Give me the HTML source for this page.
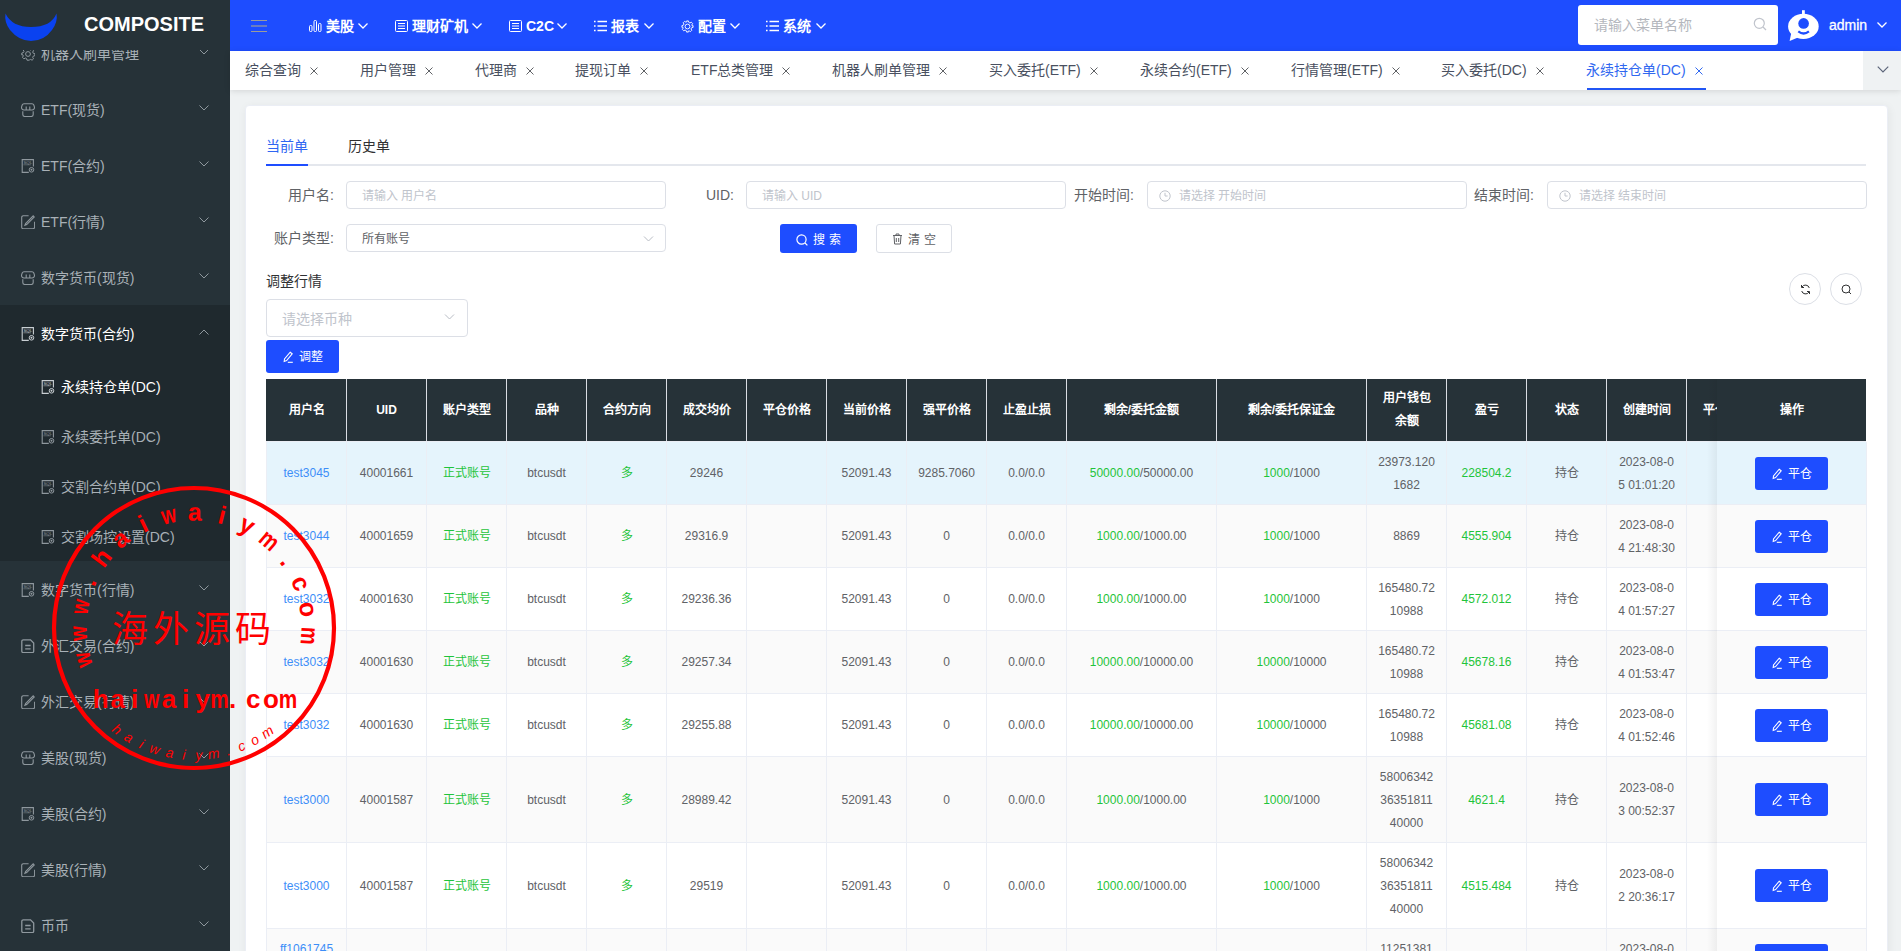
<!DOCTYPE html>
<html lang="zh-CN"><head><meta charset="utf-8">
<style>
*{box-sizing:border-box;margin:0;padding:0}
html,body{width:1901px;height:951px;overflow:hidden;background:#eff2f3;font-family:"Liberation Sans",sans-serif;font-size:14px;color:#303133}
.abs{position:absolute}
svg{display:block}
#side{position:absolute;left:0;top:0;width:230px;height:951px;background:#263238;overflow:hidden}
#logo{position:absolute;left:0;top:0;width:230px;height:50px;background:#263238;z-index:2}
#logo .t{position:absolute;left:84px;top:12px;font-size:20px;font-weight:bold;color:#fff;line-height:24px}
.mi{position:absolute;left:0;width:230px;height:56px;color:#a9b1b7;font-size:14px;line-height:20px}
.mi .ic{position:absolute;left:21px;top:22px}
.mi .tx{position:absolute;left:41px;top:19px;white-space:nowrap}
.mi .ch{position:absolute;left:199px;top:24px}
.mi.act .tx{color:#fff}
.sub{position:absolute;left:0;top:305px;width:230px;height:256px;background:#1f292e}
.si{position:absolute;left:0;width:230px;height:50px;color:#a8b0b6;font-size:14px;line-height:20px}
.si .ic{position:absolute;left:41px;top:19px}
.si .tx{position:absolute;left:61px;top:16px;white-space:nowrap}
.si.act .tx{color:#fff}
#hdr{position:absolute;left:230px;top:0;width:1671px;height:51px;background:#1e4dff}
.hb{position:absolute;left:0;width:16px;height:1px;background:#9c9c98}
.nav{position:absolute;top:16px;height:20px;color:#fff;font-size:14px;font-weight:bold;line-height:20px;white-space:nowrap}
#msearch{position:absolute;left:1348px;top:5px;width:200px;height:40px;background:#fff;border-radius:3px}
#msearch .ph{position:absolute;left:16px;top:11px;font-size:14px;line-height:18px;color:#b4b7bd}
#tabs{position:absolute;left:230px;top:51px;width:1671px;height:39px;background:#fff;box-shadow:0 1px 6px rgba(0,0,0,.12)}
.tb{position:absolute;top:9px;font-size:14px;line-height:20px;color:#495060;white-space:nowrap}
.tb .x{display:inline-block;margin-left:9px;vertical-align:0px}
.tb.on{color:#3068f0}
#card{position:absolute;left:245px;top:105px;width:1643px;height:900px;background:#fff;border:1px solid #ebeef5;border-radius:4px;box-shadow:1px 2px 10px rgba(0,0,0,.06)}
.ctab{font-size:14px;line-height:20px}
.flab{font-size:14px;line-height:20px;color:#606266;white-space:nowrap}
.inp{background:#fff;border:1px solid #dcdfe6;border-radius:4px}
.btn{border-radius:3px;font-size:12px;line-height:16px;white-space:nowrap}
.circ{width:32px;height:32px;border:1px solid #dcdfe6;border-radius:50%;background:#fff}
.th{border-right:1px solid #d9dde3;color:#fff;font-weight:bold;font-size:12px;line-height:23px;display:flex;align-items:center;justify-content:center;text-align:center}
.th2{color:#fff;font-weight:bold;font-size:12px;line-height:23px}
.cc{width:100%;text-align:center}
#tbl .abs.th2{}
.tr{border-bottom:1px solid #ebeef5}
.td{border-right:1px solid #ebeef5;font-size:12px;line-height:23px;display:flex;align-items:center;justify-content:center;text-align:center}

</style></head><body>
<div id="side"><div class="mi" style="top:25px"><span class="ic"><svg width="14" height="14" viewBox="0 0 14 14" fill="none" stroke="#8f989e" stroke-width="1"><path d="M6 .8h2l.4 1.6 1.2.6 1.5-.8 1.4 1.4-.8 1.5.6 1.2 1.6.4v2l-1.6.4-.6 1.2.8 1.5-1.4 1.4-1.5-.8-1.2.6L8 13.2H6l-.4-1.6-1.2-.6-1.5.8-1.4-1.4.8-1.5-.6-1.2L.8 8V6l1.6-.4.6-1.2-.8-1.5 1.4-1.4 1.5.8 1.2-.6z"/><circle cx="7" cy="7" r="2.4"/></svg></span><span class="tx">机器人刷单管理</span><span class="ch"><svg width="10" height="6" viewBox="0 0 10 6" fill="none" stroke="#8f989e" stroke-width="1"><path d="M0.5 0.5L5 5l4.5-4.5"/></svg></span></div><div class="mi" style="top:81px"><span class="ic"><svg width="14" height="14" viewBox="0 0 14 14" fill="none" stroke="#8f989e" stroke-width="1.1"><path d="M3 .8h8a2 2 0 0 1 1.8 1.2l.6 1.8a2.6 2.6 0 0 1-2.6 3.2H3.2A2.6 2.6 0 0 1 .6 3.8l.6-1.8A2 2 0 0 1 3 .8z"/><path d="M5.2 3.5v3.5M8.8 3.5v3.5"/><path d="M1.8 8.3v3.2a2 2 0 0 0 2 2h6.4a2 2 0 0 0 2-2V8.3"/></svg></span><span class="tx">ETF(现货)</span><span class="ch"><svg width="10" height="6" viewBox="0 0 10 6" fill="none" stroke="#8f989e" stroke-width="1"><path d="M0.5 0.5L5 5l4.5-4.5"/></svg></span></div><div class="mi" style="top:137px"><span class="ic"><svg width="14" height="14" viewBox="0 0 14 14" fill="none" stroke="#8f989e" stroke-width="1.1"><path d="M7.8 13.4H1.2V.6h11.2v7"/><text x="2.4" y="5" font-size="4.4" fill="#8f989e" stroke="none" font-family="Liberation Sans">SQL</text><path d="M2.4 5.8h7.5" stroke-width=".5"/><circle cx="10.5" cy="10.8" r="2.3" stroke-width="1"/><circle cx="10.5" cy="10.8" r="1" fill="#8f989e" stroke="none"/></svg></span><span class="tx">ETF(合约)</span><span class="ch"><svg width="10" height="6" viewBox="0 0 10 6" fill="none" stroke="#8f989e" stroke-width="1"><path d="M0.5 0.5L5 5l4.5-4.5"/></svg></span></div><div class="mi" style="top:193px"><span class="ic"><svg width="14" height="14" viewBox="0 0 14 14" fill="none" stroke="#8f989e" stroke-width="1.1"><path d="M7.6 .8H2.2A1.5 1.5 0 0 0 .7 2.3v9.9a1.5 1.5 0 0 0 1.5 1.5h9.9a1.5 1.5 0 0 0 1.5-1.5V6.7"/><path d="M12.2 .9l1.1 1.1-7.6 7.6-1.8.7.7-1.8z"/></svg></span><span class="tx">ETF(行情)</span><span class="ch"><svg width="10" height="6" viewBox="0 0 10 6" fill="none" stroke="#8f989e" stroke-width="1"><path d="M0.5 0.5L5 5l4.5-4.5"/></svg></span></div><div class="mi" style="top:249px"><span class="ic"><svg width="14" height="14" viewBox="0 0 14 14" fill="none" stroke="#8f989e" stroke-width="1.1"><path d="M3 .8h8a2 2 0 0 1 1.8 1.2l.6 1.8a2.6 2.6 0 0 1-2.6 3.2H3.2A2.6 2.6 0 0 1 .6 3.8l.6-1.8A2 2 0 0 1 3 .8z"/><path d="M5.2 3.5v3.5M8.8 3.5v3.5"/><path d="M1.8 8.3v3.2a2 2 0 0 0 2 2h6.4a2 2 0 0 0 2-2V8.3"/></svg></span><span class="tx">数字货币(现货)</span><span class="ch"><svg width="10" height="6" viewBox="0 0 10 6" fill="none" stroke="#8f989e" stroke-width="1"><path d="M0.5 0.5L5 5l4.5-4.5"/></svg></span></div><div class="mi" style="top:561px"><span class="ic"><svg width="14" height="14" viewBox="0 0 14 14" fill="none" stroke="#8f989e" stroke-width="1.1"><path d="M7.8 13.4H1.2V.6h11.2v7"/><text x="2.4" y="5" font-size="4.4" fill="#8f989e" stroke="none" font-family="Liberation Sans">SQL</text><path d="M2.4 5.8h7.5" stroke-width=".5"/><circle cx="10.5" cy="10.8" r="2.3" stroke-width="1"/><circle cx="10.5" cy="10.8" r="1" fill="#8f989e" stroke="none"/></svg></span><span class="tx">数字货币(行情)</span><span class="ch"><svg width="10" height="6" viewBox="0 0 10 6" fill="none" stroke="#8f989e" stroke-width="1"><path d="M0.5 0.5L5 5l4.5-4.5"/></svg></span></div><div class="mi" style="top:617px"><span class="ic"><svg width="14" height="14" viewBox="0 0 14 14" fill="none" stroke="#8f989e" stroke-width="1.3"><path d="M2.3.8h7.2l3.2 3.2v8.2a1.5 1.5 0 0 1-1.5 1.5H2.3A1.5 1.5 0 0 1 .8 12.2V2.3A1.5 1.5 0 0 1 2.3.8z"/><path d="M4.2 6.5h5.4M4.2 9.8h5.4"/></svg></span><span class="tx">外汇交易(合约)</span><span class="ch"><svg width="10" height="6" viewBox="0 0 10 6" fill="none" stroke="#8f989e" stroke-width="1"><path d="M0.5 0.5L5 5l4.5-4.5"/></svg></span></div><div class="mi" style="top:673px"><span class="ic"><svg width="14" height="14" viewBox="0 0 14 14" fill="none" stroke="#8f989e" stroke-width="1.1"><path d="M7.6 .8H2.2A1.5 1.5 0 0 0 .7 2.3v9.9a1.5 1.5 0 0 0 1.5 1.5h9.9a1.5 1.5 0 0 0 1.5-1.5V6.7"/><path d="M12.2 .9l1.1 1.1-7.6 7.6-1.8.7.7-1.8z"/></svg></span><span class="tx">外汇交易(行情)</span><span class="ch"><svg width="10" height="6" viewBox="0 0 10 6" fill="none" stroke="#8f989e" stroke-width="1"><path d="M0.5 0.5L5 5l4.5-4.5"/></svg></span></div><div class="mi" style="top:729px"><span class="ic"><svg width="14" height="14" viewBox="0 0 14 14" fill="none" stroke="#8f989e" stroke-width="1.1"><path d="M3 .8h8a2 2 0 0 1 1.8 1.2l.6 1.8a2.6 2.6 0 0 1-2.6 3.2H3.2A2.6 2.6 0 0 1 .6 3.8l.6-1.8A2 2 0 0 1 3 .8z"/><path d="M5.2 3.5v3.5M8.8 3.5v3.5"/><path d="M1.8 8.3v3.2a2 2 0 0 0 2 2h6.4a2 2 0 0 0 2-2V8.3"/></svg></span><span class="tx">美股(现货)</span><span class="ch"><svg width="10" height="6" viewBox="0 0 10 6" fill="none" stroke="#8f989e" stroke-width="1"><path d="M0.5 0.5L5 5l4.5-4.5"/></svg></span></div><div class="mi" style="top:785px"><span class="ic"><svg width="14" height="14" viewBox="0 0 14 14" fill="none" stroke="#8f989e" stroke-width="1.1"><path d="M7.8 13.4H1.2V.6h11.2v7"/><text x="2.4" y="5" font-size="4.4" fill="#8f989e" stroke="none" font-family="Liberation Sans">SQL</text><path d="M2.4 5.8h7.5" stroke-width=".5"/><circle cx="10.5" cy="10.8" r="2.3" stroke-width="1"/><circle cx="10.5" cy="10.8" r="1" fill="#8f989e" stroke="none"/></svg></span><span class="tx">美股(合约)</span><span class="ch"><svg width="10" height="6" viewBox="0 0 10 6" fill="none" stroke="#8f989e" stroke-width="1"><path d="M0.5 0.5L5 5l4.5-4.5"/></svg></span></div><div class="mi" style="top:841px"><span class="ic"><svg width="14" height="14" viewBox="0 0 14 14" fill="none" stroke="#8f989e" stroke-width="1.1"><path d="M7.6 .8H2.2A1.5 1.5 0 0 0 .7 2.3v9.9a1.5 1.5 0 0 0 1.5 1.5h9.9a1.5 1.5 0 0 0 1.5-1.5V6.7"/><path d="M12.2 .9l1.1 1.1-7.6 7.6-1.8.7.7-1.8z"/></svg></span><span class="tx">美股(行情)</span><span class="ch"><svg width="10" height="6" viewBox="0 0 10 6" fill="none" stroke="#8f989e" stroke-width="1"><path d="M0.5 0.5L5 5l4.5-4.5"/></svg></span></div><div class="mi" style="top:897px"><span class="ic"><svg width="14" height="14" viewBox="0 0 14 14" fill="none" stroke="#8f989e" stroke-width="1.3"><path d="M2.3.8h7.2l3.2 3.2v8.2a1.5 1.5 0 0 1-1.5 1.5H2.3A1.5 1.5 0 0 1 .8 12.2V2.3A1.5 1.5 0 0 1 2.3.8z"/><path d="M4.2 6.5h5.4M4.2 9.8h5.4"/></svg></span><span class="tx">币币</span><span class="ch"><svg width="10" height="6" viewBox="0 0 10 6" fill="none" stroke="#8f989e" stroke-width="1"><path d="M0.5 0.5L5 5l4.5-4.5"/></svg></span></div><div class="sub"><div class="mi act" style="top:0"><span class="ic"><svg width="14" height="14" viewBox="0 0 14 14" fill="none" stroke="#c9cfd3" stroke-width="1.1"><path d="M7.8 13.4H1.2V.6h11.2v7"/><text x="2.4" y="5" font-size="4.4" fill="#c9cfd3" stroke="none" font-family="Liberation Sans">SQL</text><path d="M2.4 5.8h7.5" stroke-width=".5"/><circle cx="10.5" cy="10.8" r="2.3" stroke-width="1"/><circle cx="10.5" cy="10.8" r="1" fill="#c9cfd3" stroke="none"/></svg></span><span class="tx">数字货币(合约)</span><span class="ch"><svg width="10" height="6" viewBox="0 0 10 6" fill="none" stroke="#8f989e" stroke-width="1"><path d="M0.5 5.5L5 1l4.5 4.5"/></svg></span></div><div class="si act" style="top:56px"><span class="ic"><svg width="14" height="14" viewBox="0 0 14 14" fill="none" stroke="#c9cfd3" stroke-width="1.1"><path d="M7.8 13.4H1.2V.6h11.2v7"/><text x="2.4" y="5" font-size="4.4" fill="#c9cfd3" stroke="none" font-family="Liberation Sans">SQL</text><path d="M2.4 5.8h7.5" stroke-width=".5"/><circle cx="10.5" cy="10.8" r="2.3" stroke-width="1"/><circle cx="10.5" cy="10.8" r="1" fill="#c9cfd3" stroke="none"/></svg></span><span class="tx">永续持仓单(DC)</span></div><div class="si" style="top:106px"><span class="ic"><svg width="14" height="14" viewBox="0 0 14 14" fill="none" stroke="#8f989e" stroke-width="1.1"><path d="M7.8 13.4H1.2V.6h11.2v7"/><text x="2.4" y="5" font-size="4.4" fill="#8f989e" stroke="none" font-family="Liberation Sans">SQL</text><path d="M2.4 5.8h7.5" stroke-width=".5"/><circle cx="10.5" cy="10.8" r="2.3" stroke-width="1"/><circle cx="10.5" cy="10.8" r="1" fill="#8f989e" stroke="none"/></svg></span><span class="tx">永续委托单(DC)</span></div><div class="si" style="top:156px"><span class="ic"><svg width="14" height="14" viewBox="0 0 14 14" fill="none" stroke="#8f989e" stroke-width="1.1"><path d="M7.8 13.4H1.2V.6h11.2v7"/><text x="2.4" y="5" font-size="4.4" fill="#8f989e" stroke="none" font-family="Liberation Sans">SQL</text><path d="M2.4 5.8h7.5" stroke-width=".5"/><circle cx="10.5" cy="10.8" r="2.3" stroke-width="1"/><circle cx="10.5" cy="10.8" r="1" fill="#8f989e" stroke="none"/></svg></span><span class="tx">交割合约单(DC)</span></div><div class="si" style="top:206px"><span class="ic"><svg width="14" height="14" viewBox="0 0 14 14" fill="none" stroke="#8f989e" stroke-width="1.1"><path d="M7.8 13.4H1.2V.6h11.2v7"/><text x="2.4" y="5" font-size="4.4" fill="#8f989e" stroke="none" font-family="Liberation Sans">SQL</text><path d="M2.4 5.8h7.5" stroke-width=".5"/><circle cx="10.5" cy="10.8" r="2.3" stroke-width="1"/><circle cx="10.5" cy="10.8" r="1" fill="#8f989e" stroke="none"/></svg></span><span class="tx">交割场控设置(DC)</span></div></div><div id="logo">
 <svg class="abs" style="left:4px;top:12px" width="54" height="30" viewBox="0 0 54 30"><path d="M1.5 1.5 Q0 10 6 18 Q15 29 27 29 Q40 29 48 18 Q54 10 52.5 1.5 Q47 15 27 15 Q8 15 1.5 1.5 Z" fill="#0a42f0"/></svg>
 <div class="t">COMPOSITE</div>
</div></div>
<div id="hdr"><div class="abs" style="left:21px;top:19px;width:16px;height:14px"><div class="hb" style="top:1px"></div><div class="hb" style="top:6px;height:2px;opacity:.6"></div><div class="hb" style="top:12px"></div></div><span class="abs" style="left:79px;top:20px"><svg width="13" height="12" viewBox="0 0 13 12" fill="none" stroke="#ffffff" stroke-width="1"><rect x="0.5" y="5.5" width="2.5" height="6" rx="1"/><rect x="5" y="0.5" width="2.5" height="11" rx="1"/><rect x="9.5" y="3.5" width="2.5" height="8" rx="1"/></svg></span><span class="nav" style="left:96px">美股</span><span class="abs" style="left:128px;top:23px"><svg width="10" height="6" viewBox="0 0 10 6" fill="none" stroke="#ffffff" stroke-width="1.3"><path d="M0.5 0.5L5 5l4.5-4.5"/></svg></span><span class="abs" style="left:165px;top:20px"><svg width="13" height="12" viewBox="0 0 13 12" fill="none" stroke="#ffffff" stroke-width="1"><rect x="0.5" y="0.5" width="12" height="11" rx="1"/><path d="M3 3.5h7M3 6h7M3 8.5h7"/></svg></span><span class="nav" style="left:182px">理财矿机</span><span class="abs" style="left:242px;top:23px"><svg width="10" height="6" viewBox="0 0 10 6" fill="none" stroke="#ffffff" stroke-width="1.3"><path d="M0.5 0.5L5 5l4.5-4.5"/></svg></span><span class="abs" style="left:279px;top:20px"><svg width="13" height="12" viewBox="0 0 13 12" fill="none" stroke="#ffffff" stroke-width="1"><rect x="0.5" y="0.5" width="12" height="11" rx="1"/><path d="M3 3.5h7M3 6h7M3 8.5h7"/></svg></span><span class="nav" style="left:296px">C2C</span><span class="abs" style="left:327px;top:23px"><svg width="10" height="6" viewBox="0 0 10 6" fill="none" stroke="#ffffff" stroke-width="1.3"><path d="M0.5 0.5L5 5l4.5-4.5"/></svg></span><span class="abs" style="left:364px;top:20px"><svg width="13" height="12" viewBox="0 0 13 12" fill="none" stroke="#ffffff" stroke-width="1.4"><path d="M0 1.5h1.6M0 6h1.6M0 10.5h1.6M3.5 1.5H13M3.5 6H13M3.5 10.5H13"/></svg></span><span class="nav" style="left:381px">报表</span><span class="abs" style="left:414px;top:23px"><svg width="10" height="6" viewBox="0 0 10 6" fill="none" stroke="#ffffff" stroke-width="1.3"><path d="M0.5 0.5L5 5l4.5-4.5"/></svg></span><span class="abs" style="left:451px;top:20px"><svg width="13" height="13" viewBox="0 0 14 14" fill="none" stroke="#ffffff" stroke-width="1"><path d="M6 1h2l.4 1.6 1.2.6 1.5-.8 1.4 1.4-.8 1.5.6 1.2L13 6v2l-1.6.4-.6 1.2.8 1.5-1.4 1.4-1.5-.8-1.2.6L8 13H6l-.4-1.6-1.2-.6-1.5.8-1.4-1.4.8-1.5-.6-1.2L1 8V6l1.6-.4.6-1.2-.8-1.5 1.4-1.4 1.5.8 1.2-.6z"/><circle cx="7" cy="7" r="2.6"/></svg></span><span class="nav" style="left:468px">配置</span><span class="abs" style="left:500px;top:23px"><svg width="10" height="6" viewBox="0 0 10 6" fill="none" stroke="#ffffff" stroke-width="1.3"><path d="M0.5 0.5L5 5l4.5-4.5"/></svg></span><span class="abs" style="left:536px;top:20px"><svg width="13" height="12" viewBox="0 0 13 12" fill="none" stroke="#ffffff" stroke-width="1.4"><path d="M0 1.5h1.6M0 6h1.6M0 10.5h1.6M3.5 1.5H13M3.5 6H13M3.5 10.5H13"/></svg></span><span class="nav" style="left:553px">系统</span><span class="abs" style="left:586px;top:23px"><svg width="10" height="6" viewBox="0 0 10 6" fill="none" stroke="#ffffff" stroke-width="1.3"><path d="M0.5 0.5L5 5l4.5-4.5"/></svg></span><div id="msearch"><span class="ph">请输入菜单名称</span><svg class="abs" style="left:175px;top:12px" width="14" height="14" viewBox="0 0 14 14" fill="none" stroke="#c0c4cc" stroke-width="1.2"><circle cx="6.3" cy="6.3" r="5"/><path d="M10 10l3 3"/></svg></div><svg class="abs" style="left:1558px;top:9px" width="32" height="34" viewBox="0 0 32 34"><ellipse cx="15.4" cy="17.4" rx="15.3" ry="12.6" fill="#fff"/><path d="M3.5 23 L1.6 32 L10 28.5 Z" fill="#fff"/><rect x="14" y="1.2" width="2.8" height="4.5" fill="#fff"/><circle cx="15.6" cy="14.4" r="5.3" fill="#1e4dff"/><path d="M10.3 22.3 Q15.6 26.7 20.9 22.3" stroke="#1e4dff" stroke-width="2.2" fill="none"/></svg><span class="abs" style="left:1599px;top:15px;font-size:14px;line-height:20px;color:#fff;-webkit-text-stroke:0.3px #fff">admin</span><span class="abs" style="left:1647px;top:22px"><svg width="10" height="6" viewBox="0 0 10 6" fill="none" stroke="#ffffff" stroke-width="1.3"><path d="M0.5 0.5L5 5l4.5-4.5"/></svg></span></div>
<div id="tabs"><span class="tb" style="left:15px">综合查询<svg class="x" width="8" height="8" viewBox="0 0 8 8" stroke="#606266" stroke-width="1"><path d="M.5.5l7 7M7.5.5l-7 7"/></svg></span><span class="tb" style="left:130px">用户管理<svg class="x" width="8" height="8" viewBox="0 0 8 8" stroke="#606266" stroke-width="1"><path d="M.5.5l7 7M7.5.5l-7 7"/></svg></span><span class="tb" style="left:245px">代理商<svg class="x" width="8" height="8" viewBox="0 0 8 8" stroke="#606266" stroke-width="1"><path d="M.5.5l7 7M7.5.5l-7 7"/></svg></span><span class="tb" style="left:345px">提现订单<svg class="x" width="8" height="8" viewBox="0 0 8 8" stroke="#606266" stroke-width="1"><path d="M.5.5l7 7M7.5.5l-7 7"/></svg></span><span class="tb" style="left:461px">ETF总类管理<svg class="x" width="8" height="8" viewBox="0 0 8 8" stroke="#606266" stroke-width="1"><path d="M.5.5l7 7M7.5.5l-7 7"/></svg></span><span class="tb" style="left:602px">机器人刷单管理<svg class="x" width="8" height="8" viewBox="0 0 8 8" stroke="#606266" stroke-width="1"><path d="M.5.5l7 7M7.5.5l-7 7"/></svg></span><span class="tb" style="left:759px">买入委托(ETF)<svg class="x" width="8" height="8" viewBox="0 0 8 8" stroke="#606266" stroke-width="1"><path d="M.5.5l7 7M7.5.5l-7 7"/></svg></span><span class="tb" style="left:910px">永续合约(ETF)<svg class="x" width="8" height="8" viewBox="0 0 8 8" stroke="#606266" stroke-width="1"><path d="M.5.5l7 7M7.5.5l-7 7"/></svg></span><span class="tb" style="left:1061px">行情管理(ETF)<svg class="x" width="8" height="8" viewBox="0 0 8 8" stroke="#606266" stroke-width="1"><path d="M.5.5l7 7M7.5.5l-7 7"/></svg></span><span class="tb" style="left:1211px">买入委托(DC)<svg class="x" width="8" height="8" viewBox="0 0 8 8" stroke="#606266" stroke-width="1"><path d="M.5.5l7 7M7.5.5l-7 7"/></svg></span><span class="tb on" style="left:1356px">永续持仓单(DC)<svg class="x" width="8" height="8" viewBox="0 0 8 8" stroke="#3068f0" stroke-width="1"><path d="M.5.5l7 7M7.5.5l-7 7"/></svg></span><div class="abs" style="left:1357px;top:37px;width:119px;height:2px;background:#2156f5"></div><div class="abs" style="left:1633px;top:0;width:38px;height:39px;background:#eff2f3"><span class="abs" style="left:14px;top:15px"><svg width="12" height="7" viewBox="0 0 10 6" fill="none" stroke="#5b6478" stroke-width="1"><path d="M0.5 0.5L5 5l4.5-4.5"/></svg></span></div></div>
<div id="card"></div>
<span class="abs ctab" style="left:266px;top:136px;color:#2f66f2">当前单</span>
<span class="abs ctab" style="left:348px;top:136px;color:#303133">历史单</span>
<div class="abs" style="left:266px;top:164px;width:1600px;height:2px;background:#e4e7ed"></div>
<div class="abs" style="left:266px;top:164px;width:42px;height:2px;background:#1e4dff"></div>
<span class="abs flab" style="right:1567px;top:185px">用户名:</span>
<div class="abs inp" style="left:346px;top:181px;width:320px;height:28px"><span class="abs" style="left:15px;top:1px;line-height:26px;font-size:12px;color:#c0c4cc;white-space:nowrap">请输入 用户名</span></div>
<span class="abs flab" style="right:1167px;top:185px">UID:</span>
<div class="abs inp" style="left:746px;top:181px;width:320px;height:28px"><span class="abs" style="left:15px;top:1px;line-height:26px;font-size:12px;color:#c0c4cc;white-space:nowrap">请输入 UID</span></div>
<span class="abs flab" style="right:767px;top:185px">开始时间:</span>
<div class="abs inp" style="left:1147px;top:181px;width:320px;height:28px"><span class="abs" style="left:11px;top:8px"><svg width="12" height="12" viewBox="0 0 12 12" fill="none" stroke="#c0c4cc" stroke-width="1"><circle cx="6" cy="6" r="5.2"/><path d="M6 2.8V6h2.6"/></svg></span><span class="abs" style="left:31px;top:1px;line-height:26px;font-size:12px;color:#c0c4cc;white-space:nowrap">请选择 开始时间</span></div>
<span class="abs flab" style="right:367px;top:185px">结束时间:</span>
<div class="abs inp" style="left:1547px;top:181px;width:320px;height:28px"><span class="abs" style="left:11px;top:8px"><svg width="12" height="12" viewBox="0 0 12 12" fill="none" stroke="#c0c4cc" stroke-width="1"><circle cx="6" cy="6" r="5.2"/><path d="M6 2.8V6h2.6"/></svg></span><span class="abs" style="left:31px;top:1px;line-height:26px;font-size:12px;color:#c0c4cc;white-space:nowrap">请选择 结束时间</span></div>
<span class="abs flab" style="right:1567px;top:228px">账户类型:</span>
<div class="abs inp" style="left:346px;top:224px;width:320px;height:28px"><span class="abs" style="left:15px;top:1px;line-height:26px;font-size:12px;color:#606266;white-space:nowrap">所有账号</span><span class="abs" style="right:11px;top:11px"><svg width="11" height="6" viewBox="0 0 10 6" fill="none" stroke="#b8bcc4" stroke-width="1"><path d="M0.5 0.5L5 5l4.5-4.5"/></svg></span></div>
<div class="abs btn" style="left:780px;top:224px;width:77px;height:29px;background:#1e4dff;color:#fff"><svg class="abs" style="left:16px;top:10px" width="12" height="12" viewBox="0 0 12 12" fill="none" stroke="#fff" stroke-width="1.2"><circle cx="5.5" cy="5.5" r="4.6"/><path d="M9 9l2.4 2.4"/></svg><span class="abs" style="left:33px;top:8px;letter-spacing:4px">搜索</span></div>
<div class="abs btn" style="left:876px;top:224px;width:76px;height:29px;background:#fff;border:1px solid #dcdfe6;color:#606266"><svg class="abs" style="left:15px;top:8px" width="11" height="12" viewBox="0 0 11 12" fill="none" stroke="#606266" stroke-width="1"><path d="M1 2.5h9M4 2.5V1h3v1.5M2 2.5l.6 8.5h5.8L9 2.5M4.3 5v4M6.7 5v4"/></svg><span class="abs" style="left:31px;top:7px;letter-spacing:4px">清空</span></div>
<span class="abs" style="left:266px;top:271px;font-size:14px;line-height:20px;color:#303133">调整行情</span>
<div class="abs inp" style="left:266px;top:299px;width:202px;height:38px"><span class="abs" style="left:15px;top:1px;line-height:36px;font-size:14px;color:#c0c4cc;white-space:nowrap">请选择币种</span><span class="abs" style="right:12px;top:14px"><svg width="11" height="6" viewBox="0 0 10 6" fill="none" stroke="#b8bcc4" stroke-width="1"><path d="M0.5 0.5L5 5l4.5-4.5"/></svg></span></div>
<div class="abs btn" style="left:266px;top:340px;width:73px;height:33px;background:#1e4dff;color:#fff"><span class="abs" style="left:17px;top:11px"><svg width="11" height="12" viewBox="0 0 11 12" fill="none" stroke="#fff" stroke-width="1.1"><path d="M7.2 1.2l2 1.6-5.6 6.8-2.4.9.3-2.5z"/><path d="M4.8 11.3h5"/></svg></span><span class="abs" style="left:33px;top:9px">调整</span></div>
<div class="abs circ" style="left:1789px;top:273px"><svg class="abs" style="left:10px;top:10px" width="11" height="11" viewBox="0 0 11 11" fill="none" stroke="#303133" stroke-width="1"><path d="M9.3 4A4 4 0 0 0 2 3M1.7 7A4 4 0 0 0 9 8"/><path d="M1.5 1v2.5H4M9.5 10V7.5H7" /></svg></div>
<div class="abs circ" style="left:1830px;top:273px"><svg class="abs" style="left:10px;top:10px" width="11" height="11" viewBox="0 0 11 11" fill="none" stroke="#303133" stroke-width="1"><circle cx="5" cy="5" r="4"/><path d="M8 8l2 2"/></svg></div>
<div id="tbl">
<div class="abs" style="left:266px;top:379px;width:1600px;height:63px;background:#263238;border-bottom:1px solid #ebeef5"></div>
<div class="abs th" style="left:267px;top:379px;width:80px;height:62px"><div class="cc">用户名</div></div>
<div class="abs th" style="left:347px;top:379px;width:80px;height:62px"><div class="cc">UID</div></div>
<div class="abs th" style="left:427px;top:379px;width:80px;height:62px"><div class="cc">账户类型</div></div>
<div class="abs th" style="left:507px;top:379px;width:80px;height:62px"><div class="cc">品种</div></div>
<div class="abs th" style="left:587px;top:379px;width:80px;height:62px"><div class="cc">合约方向</div></div>
<div class="abs th" style="left:667px;top:379px;width:80px;height:62px"><div class="cc">成交均价</div></div>
<div class="abs th" style="left:747px;top:379px;width:80px;height:62px"><div class="cc">平仓价格</div></div>
<div class="abs th" style="left:827px;top:379px;width:80px;height:62px"><div class="cc">当前价格</div></div>
<div class="abs th" style="left:907px;top:379px;width:80px;height:62px"><div class="cc">强平价格</div></div>
<div class="abs th" style="left:987px;top:379px;width:80px;height:62px"><div class="cc">止盈止损</div></div>
<div class="abs th" style="left:1067px;top:379px;width:150px;height:62px"><div class="cc">剩余/委托金额</div></div>
<div class="abs th" style="left:1217px;top:379px;width:150px;height:62px"><div class="cc">剩余/委托保证金</div></div>
<div class="abs th" style="left:1367px;top:379px;width:80px;height:62px"><div class="cc">用户钱包<br>余额</div></div>
<div class="abs th" style="left:1447px;top:379px;width:80px;height:62px"><div class="cc">盈亏</div></div>
<div class="abs th" style="left:1527px;top:379px;width:80px;height:62px"><div class="cc">状态</div></div>
<div class="abs th" style="left:1607px;top:379px;width:80px;height:62px"><div class="cc">创建时间</div></div>
<div class="abs th" style="left:1687px;top:379px;width:80px;height:62px"><div class="cc">平仓价格</div></div>
<div class="abs tr" style="left:266px;top:442px;width:1600px;height:63px;background:#e5f4fc"></div>
<div class="abs td" style="left:267px;top:442px;width:80px;height:63px;color:#3d8ef8"><div class="cc">test3045</div></div>
<div class="abs td" style="left:347px;top:442px;width:80px;height:63px;color:#606266"><div class="cc">40001661</div></div>
<div class="abs td" style="left:427px;top:442px;width:80px;height:63px;color:#1fc43a"><div class="cc">正式账号</div></div>
<div class="abs td" style="left:507px;top:442px;width:80px;height:63px;color:#606266"><div class="cc">btcusdt</div></div>
<div class="abs td" style="left:587px;top:442px;width:80px;height:63px;color:#1fc43a"><div class="cc">多</div></div>
<div class="abs td" style="left:667px;top:442px;width:80px;height:63px;color:#606266"><div class="cc">29246</div></div>
<div class="abs td" style="left:747px;top:442px;width:80px;height:63px;color:#606266"><div class="cc"></div></div>
<div class="abs td" style="left:827px;top:442px;width:80px;height:63px;color:#606266"><div class="cc">52091.43</div></div>
<div class="abs td" style="left:907px;top:442px;width:80px;height:63px;color:#606266"><div class="cc">9285.7060</div></div>
<div class="abs td" style="left:987px;top:442px;width:80px;height:63px;color:#606266"><div class="cc">0.0/0.0</div></div>
<div class="abs td" style="left:1067px;top:442px;width:150px;height:63px;color:#606266"><div class="cc"><span style="color:#1fc43a">50000.00</span>/50000.00</div></div>
<div class="abs td" style="left:1217px;top:442px;width:150px;height:63px;color:#606266"><div class="cc"><span style="color:#1fc43a">1000</span>/1000</div></div>
<div class="abs td" style="left:1367px;top:442px;width:80px;height:63px;color:#606266"><div class="cc">23973.120<br>1682</div></div>
<div class="abs td" style="left:1447px;top:442px;width:80px;height:63px;color:#606266"><div class="cc"><span style="color:#1fc43a">228504.2</span></div></div>
<div class="abs td" style="left:1527px;top:442px;width:80px;height:63px;color:#606266"><div class="cc">持仓</div></div>
<div class="abs td" style="left:1607px;top:442px;width:80px;height:63px;color:#606266"><div class="cc">2023-08-0<br>5 01:01:20</div></div>
<div class="abs td" style="left:1687px;top:442px;width:80px;height:63px;color:#606266"><div class="cc"></div></div>
<div class="abs tr" style="left:266px;top:505px;width:1600px;height:63px;background:#fafafa"></div>
<div class="abs td" style="left:267px;top:505px;width:80px;height:63px;color:#3d8ef8"><div class="cc">test3044</div></div>
<div class="abs td" style="left:347px;top:505px;width:80px;height:63px;color:#606266"><div class="cc">40001659</div></div>
<div class="abs td" style="left:427px;top:505px;width:80px;height:63px;color:#1fc43a"><div class="cc">正式账号</div></div>
<div class="abs td" style="left:507px;top:505px;width:80px;height:63px;color:#606266"><div class="cc">btcusdt</div></div>
<div class="abs td" style="left:587px;top:505px;width:80px;height:63px;color:#1fc43a"><div class="cc">多</div></div>
<div class="abs td" style="left:667px;top:505px;width:80px;height:63px;color:#606266"><div class="cc">29316.9</div></div>
<div class="abs td" style="left:747px;top:505px;width:80px;height:63px;color:#606266"><div class="cc"></div></div>
<div class="abs td" style="left:827px;top:505px;width:80px;height:63px;color:#606266"><div class="cc">52091.43</div></div>
<div class="abs td" style="left:907px;top:505px;width:80px;height:63px;color:#606266"><div class="cc">0</div></div>
<div class="abs td" style="left:987px;top:505px;width:80px;height:63px;color:#606266"><div class="cc">0.0/0.0</div></div>
<div class="abs td" style="left:1067px;top:505px;width:150px;height:63px;color:#606266"><div class="cc"><span style="color:#1fc43a">1000.00</span>/1000.00</div></div>
<div class="abs td" style="left:1217px;top:505px;width:150px;height:63px;color:#606266"><div class="cc"><span style="color:#1fc43a">1000</span>/1000</div></div>
<div class="abs td" style="left:1367px;top:505px;width:80px;height:63px;color:#606266"><div class="cc">8869</div></div>
<div class="abs td" style="left:1447px;top:505px;width:80px;height:63px;color:#606266"><div class="cc"><span style="color:#1fc43a">4555.904</span></div></div>
<div class="abs td" style="left:1527px;top:505px;width:80px;height:63px;color:#606266"><div class="cc">持仓</div></div>
<div class="abs td" style="left:1607px;top:505px;width:80px;height:63px;color:#606266"><div class="cc">2023-08-0<br>4 21:48:30</div></div>
<div class="abs td" style="left:1687px;top:505px;width:80px;height:63px;color:#606266"><div class="cc"></div></div>
<div class="abs tr" style="left:266px;top:568px;width:1600px;height:63px;background:#ffffff"></div>
<div class="abs td" style="left:267px;top:568px;width:80px;height:63px;color:#3d8ef8"><div class="cc">test3032</div></div>
<div class="abs td" style="left:347px;top:568px;width:80px;height:63px;color:#606266"><div class="cc">40001630</div></div>
<div class="abs td" style="left:427px;top:568px;width:80px;height:63px;color:#1fc43a"><div class="cc">正式账号</div></div>
<div class="abs td" style="left:507px;top:568px;width:80px;height:63px;color:#606266"><div class="cc">btcusdt</div></div>
<div class="abs td" style="left:587px;top:568px;width:80px;height:63px;color:#1fc43a"><div class="cc">多</div></div>
<div class="abs td" style="left:667px;top:568px;width:80px;height:63px;color:#606266"><div class="cc">29236.36</div></div>
<div class="abs td" style="left:747px;top:568px;width:80px;height:63px;color:#606266"><div class="cc"></div></div>
<div class="abs td" style="left:827px;top:568px;width:80px;height:63px;color:#606266"><div class="cc">52091.43</div></div>
<div class="abs td" style="left:907px;top:568px;width:80px;height:63px;color:#606266"><div class="cc">0</div></div>
<div class="abs td" style="left:987px;top:568px;width:80px;height:63px;color:#606266"><div class="cc">0.0/0.0</div></div>
<div class="abs td" style="left:1067px;top:568px;width:150px;height:63px;color:#606266"><div class="cc"><span style="color:#1fc43a">1000.00</span>/1000.00</div></div>
<div class="abs td" style="left:1217px;top:568px;width:150px;height:63px;color:#606266"><div class="cc"><span style="color:#1fc43a">1000</span>/1000</div></div>
<div class="abs td" style="left:1367px;top:568px;width:80px;height:63px;color:#606266"><div class="cc">165480.72<br>10988</div></div>
<div class="abs td" style="left:1447px;top:568px;width:80px;height:63px;color:#606266"><div class="cc"><span style="color:#1fc43a">4572.012</span></div></div>
<div class="abs td" style="left:1527px;top:568px;width:80px;height:63px;color:#606266"><div class="cc">持仓</div></div>
<div class="abs td" style="left:1607px;top:568px;width:80px;height:63px;color:#606266"><div class="cc">2023-08-0<br>4 01:57:27</div></div>
<div class="abs td" style="left:1687px;top:568px;width:80px;height:63px;color:#606266"><div class="cc"></div></div>
<div class="abs tr" style="left:266px;top:631px;width:1600px;height:63px;background:#fafafa"></div>
<div class="abs td" style="left:267px;top:631px;width:80px;height:63px;color:#3d8ef8"><div class="cc">test3032</div></div>
<div class="abs td" style="left:347px;top:631px;width:80px;height:63px;color:#606266"><div class="cc">40001630</div></div>
<div class="abs td" style="left:427px;top:631px;width:80px;height:63px;color:#1fc43a"><div class="cc">正式账号</div></div>
<div class="abs td" style="left:507px;top:631px;width:80px;height:63px;color:#606266"><div class="cc">btcusdt</div></div>
<div class="abs td" style="left:587px;top:631px;width:80px;height:63px;color:#1fc43a"><div class="cc">多</div></div>
<div class="abs td" style="left:667px;top:631px;width:80px;height:63px;color:#606266"><div class="cc">29257.34</div></div>
<div class="abs td" style="left:747px;top:631px;width:80px;height:63px;color:#606266"><div class="cc"></div></div>
<div class="abs td" style="left:827px;top:631px;width:80px;height:63px;color:#606266"><div class="cc">52091.43</div></div>
<div class="abs td" style="left:907px;top:631px;width:80px;height:63px;color:#606266"><div class="cc">0</div></div>
<div class="abs td" style="left:987px;top:631px;width:80px;height:63px;color:#606266"><div class="cc">0.0/0.0</div></div>
<div class="abs td" style="left:1067px;top:631px;width:150px;height:63px;color:#606266"><div class="cc"><span style="color:#1fc43a">10000.00</span>/10000.00</div></div>
<div class="abs td" style="left:1217px;top:631px;width:150px;height:63px;color:#606266"><div class="cc"><span style="color:#1fc43a">10000</span>/10000</div></div>
<div class="abs td" style="left:1367px;top:631px;width:80px;height:63px;color:#606266"><div class="cc">165480.72<br>10988</div></div>
<div class="abs td" style="left:1447px;top:631px;width:80px;height:63px;color:#606266"><div class="cc"><span style="color:#1fc43a">45678.16</span></div></div>
<div class="abs td" style="left:1527px;top:631px;width:80px;height:63px;color:#606266"><div class="cc">持仓</div></div>
<div class="abs td" style="left:1607px;top:631px;width:80px;height:63px;color:#606266"><div class="cc">2023-08-0<br>4 01:53:47</div></div>
<div class="abs td" style="left:1687px;top:631px;width:80px;height:63px;color:#606266"><div class="cc"></div></div>
<div class="abs tr" style="left:266px;top:694px;width:1600px;height:63px;background:#ffffff"></div>
<div class="abs td" style="left:267px;top:694px;width:80px;height:63px;color:#3d8ef8"><div class="cc">test3032</div></div>
<div class="abs td" style="left:347px;top:694px;width:80px;height:63px;color:#606266"><div class="cc">40001630</div></div>
<div class="abs td" style="left:427px;top:694px;width:80px;height:63px;color:#1fc43a"><div class="cc">正式账号</div></div>
<div class="abs td" style="left:507px;top:694px;width:80px;height:63px;color:#606266"><div class="cc">btcusdt</div></div>
<div class="abs td" style="left:587px;top:694px;width:80px;height:63px;color:#1fc43a"><div class="cc">多</div></div>
<div class="abs td" style="left:667px;top:694px;width:80px;height:63px;color:#606266"><div class="cc">29255.88</div></div>
<div class="abs td" style="left:747px;top:694px;width:80px;height:63px;color:#606266"><div class="cc"></div></div>
<div class="abs td" style="left:827px;top:694px;width:80px;height:63px;color:#606266"><div class="cc">52091.43</div></div>
<div class="abs td" style="left:907px;top:694px;width:80px;height:63px;color:#606266"><div class="cc">0</div></div>
<div class="abs td" style="left:987px;top:694px;width:80px;height:63px;color:#606266"><div class="cc">0.0/0.0</div></div>
<div class="abs td" style="left:1067px;top:694px;width:150px;height:63px;color:#606266"><div class="cc"><span style="color:#1fc43a">10000.00</span>/10000.00</div></div>
<div class="abs td" style="left:1217px;top:694px;width:150px;height:63px;color:#606266"><div class="cc"><span style="color:#1fc43a">10000</span>/10000</div></div>
<div class="abs td" style="left:1367px;top:694px;width:80px;height:63px;color:#606266"><div class="cc">165480.72<br>10988</div></div>
<div class="abs td" style="left:1447px;top:694px;width:80px;height:63px;color:#606266"><div class="cc"><span style="color:#1fc43a">45681.08</span></div></div>
<div class="abs td" style="left:1527px;top:694px;width:80px;height:63px;color:#606266"><div class="cc">持仓</div></div>
<div class="abs td" style="left:1607px;top:694px;width:80px;height:63px;color:#606266"><div class="cc">2023-08-0<br>4 01:52:46</div></div>
<div class="abs td" style="left:1687px;top:694px;width:80px;height:63px;color:#606266"><div class="cc"></div></div>
<div class="abs tr" style="left:266px;top:757px;width:1600px;height:86px;background:#fafafa"></div>
<div class="abs td" style="left:267px;top:757px;width:80px;height:86px;color:#3d8ef8"><div class="cc">test3000</div></div>
<div class="abs td" style="left:347px;top:757px;width:80px;height:86px;color:#606266"><div class="cc">40001587</div></div>
<div class="abs td" style="left:427px;top:757px;width:80px;height:86px;color:#1fc43a"><div class="cc">正式账号</div></div>
<div class="abs td" style="left:507px;top:757px;width:80px;height:86px;color:#606266"><div class="cc">btcusdt</div></div>
<div class="abs td" style="left:587px;top:757px;width:80px;height:86px;color:#1fc43a"><div class="cc">多</div></div>
<div class="abs td" style="left:667px;top:757px;width:80px;height:86px;color:#606266"><div class="cc">28989.42</div></div>
<div class="abs td" style="left:747px;top:757px;width:80px;height:86px;color:#606266"><div class="cc"></div></div>
<div class="abs td" style="left:827px;top:757px;width:80px;height:86px;color:#606266"><div class="cc">52091.43</div></div>
<div class="abs td" style="left:907px;top:757px;width:80px;height:86px;color:#606266"><div class="cc">0</div></div>
<div class="abs td" style="left:987px;top:757px;width:80px;height:86px;color:#606266"><div class="cc">0.0/0.0</div></div>
<div class="abs td" style="left:1067px;top:757px;width:150px;height:86px;color:#606266"><div class="cc"><span style="color:#1fc43a">1000.00</span>/1000.00</div></div>
<div class="abs td" style="left:1217px;top:757px;width:150px;height:86px;color:#606266"><div class="cc"><span style="color:#1fc43a">1000</span>/1000</div></div>
<div class="abs td" style="left:1367px;top:757px;width:80px;height:86px;color:#606266"><div class="cc">58006342<br>36351811<br>40000</div></div>
<div class="abs td" style="left:1447px;top:757px;width:80px;height:86px;color:#606266"><div class="cc"><span style="color:#1fc43a">4621.4</span></div></div>
<div class="abs td" style="left:1527px;top:757px;width:80px;height:86px;color:#606266"><div class="cc">持仓</div></div>
<div class="abs td" style="left:1607px;top:757px;width:80px;height:86px;color:#606266"><div class="cc">2023-08-0<br>3 00:52:37</div></div>
<div class="abs td" style="left:1687px;top:757px;width:80px;height:86px;color:#606266"><div class="cc"></div></div>
<div class="abs tr" style="left:266px;top:843px;width:1600px;height:86px;background:#ffffff"></div>
<div class="abs td" style="left:267px;top:843px;width:80px;height:86px;color:#3d8ef8"><div class="cc">test3000</div></div>
<div class="abs td" style="left:347px;top:843px;width:80px;height:86px;color:#606266"><div class="cc">40001587</div></div>
<div class="abs td" style="left:427px;top:843px;width:80px;height:86px;color:#1fc43a"><div class="cc">正式账号</div></div>
<div class="abs td" style="left:507px;top:843px;width:80px;height:86px;color:#606266"><div class="cc">btcusdt</div></div>
<div class="abs td" style="left:587px;top:843px;width:80px;height:86px;color:#1fc43a"><div class="cc">多</div></div>
<div class="abs td" style="left:667px;top:843px;width:80px;height:86px;color:#606266"><div class="cc">29519</div></div>
<div class="abs td" style="left:747px;top:843px;width:80px;height:86px;color:#606266"><div class="cc"></div></div>
<div class="abs td" style="left:827px;top:843px;width:80px;height:86px;color:#606266"><div class="cc">52091.43</div></div>
<div class="abs td" style="left:907px;top:843px;width:80px;height:86px;color:#606266"><div class="cc">0</div></div>
<div class="abs td" style="left:987px;top:843px;width:80px;height:86px;color:#606266"><div class="cc">0.0/0.0</div></div>
<div class="abs td" style="left:1067px;top:843px;width:150px;height:86px;color:#606266"><div class="cc"><span style="color:#1fc43a">1000.00</span>/1000.00</div></div>
<div class="abs td" style="left:1217px;top:843px;width:150px;height:86px;color:#606266"><div class="cc"><span style="color:#1fc43a">1000</span>/1000</div></div>
<div class="abs td" style="left:1367px;top:843px;width:80px;height:86px;color:#606266"><div class="cc">58006342<br>36351811<br>40000</div></div>
<div class="abs td" style="left:1447px;top:843px;width:80px;height:86px;color:#606266"><div class="cc"><span style="color:#1fc43a">4515.484</span></div></div>
<div class="abs td" style="left:1527px;top:843px;width:80px;height:86px;color:#606266"><div class="cc">持仓</div></div>
<div class="abs td" style="left:1607px;top:843px;width:80px;height:86px;color:#606266"><div class="cc">2023-08-0<br>2 20:36:17</div></div>
<div class="abs td" style="left:1687px;top:843px;width:80px;height:86px;color:#606266"><div class="cc"></div></div>
<div class="abs tr" style="left:266px;top:929px;width:1600px;height:63px;background:#fafafa"></div>
<div class="abs td" style="left:267px;top:929px;width:80px;height:63px;color:#3d8ef8"><div class="cc">ff1061745<br>@qq.com</div></div>
<div class="abs td" style="left:347px;top:929px;width:80px;height:63px;color:#606266"><div class="cc">40001573</div></div>
<div class="abs td" style="left:427px;top:929px;width:80px;height:63px;color:#1fc43a"><div class="cc">正式账号</div></div>
<div class="abs td" style="left:507px;top:929px;width:80px;height:63px;color:#606266"><div class="cc">btcusdt</div></div>
<div class="abs td" style="left:587px;top:929px;width:80px;height:63px;color:#1fc43a"><div class="cc">多</div></div>
<div class="abs td" style="left:667px;top:929px;width:80px;height:63px;color:#606266"><div class="cc">29480</div></div>
<div class="abs td" style="left:747px;top:929px;width:80px;height:63px;color:#606266"><div class="cc"></div></div>
<div class="abs td" style="left:827px;top:929px;width:80px;height:63px;color:#606266"><div class="cc">52091.43</div></div>
<div class="abs td" style="left:907px;top:929px;width:80px;height:63px;color:#606266"><div class="cc">0</div></div>
<div class="abs td" style="left:987px;top:929px;width:80px;height:63px;color:#606266"><div class="cc">0.0/0.0</div></div>
<div class="abs td" style="left:1067px;top:929px;width:150px;height:63px;color:#606266"><div class="cc"><span style="color:#1fc43a">1000.00</span>/1000.00</div></div>
<div class="abs td" style="left:1217px;top:929px;width:150px;height:63px;color:#606266"><div class="cc"><span style="color:#1fc43a">1000</span>/1000</div></div>
<div class="abs td" style="left:1367px;top:929px;width:80px;height:63px;color:#606266"><div class="cc">11251381<br>50000</div></div>
<div class="abs td" style="left:1447px;top:929px;width:80px;height:63px;color:#606266"><div class="cc"><span style="color:#1fc43a">4521.1</span></div></div>
<div class="abs td" style="left:1527px;top:929px;width:80px;height:63px;color:#606266"><div class="cc">持仓</div></div>
<div class="abs td" style="left:1607px;top:929px;width:80px;height:63px;color:#606266"><div class="cc">2023-08-0<br>2 20:10:11</div></div>
<div class="abs td" style="left:1687px;top:929px;width:80px;height:63px;color:#606266"><div class="cc"></div></div>
<div class="abs" style="left:1707px;top:379px;width:10px;height:700px;background:linear-gradient(to right,rgba(0,0,0,0),rgba(0,0,0,.05))"></div>
<div class="abs th" style="left:1717px;top:379px;width:149px;height:62px;background:#263238;border-right:0"><div class="cc">操作</div></div>
<div class="abs tr" style="left:1717px;top:442px;width:149px;height:63px;background:#e5f4fc"></div>
<div class="abs btn" style="left:1755px;top:457px;width:73px;height:33px;background:#1e4dff;color:#fff"><span class="abs" style="left:17px;top:11px"><svg width="11" height="12" viewBox="0 0 11 12" fill="none" stroke="#fff" stroke-width="1.1"><path d="M7.2 1.2l2 1.6-5.6 6.8-2.4.9.3-2.5z"/><path d="M4.8 11.3h5"/></svg></span><span class="abs" style="left:33px;top:9px">平仓</span></div>
<div class="abs tr" style="left:1717px;top:505px;width:149px;height:63px;background:#fafafa"></div>
<div class="abs btn" style="left:1755px;top:520px;width:73px;height:33px;background:#1e4dff;color:#fff"><span class="abs" style="left:17px;top:11px"><svg width="11" height="12" viewBox="0 0 11 12" fill="none" stroke="#fff" stroke-width="1.1"><path d="M7.2 1.2l2 1.6-5.6 6.8-2.4.9.3-2.5z"/><path d="M4.8 11.3h5"/></svg></span><span class="abs" style="left:33px;top:9px">平仓</span></div>
<div class="abs tr" style="left:1717px;top:568px;width:149px;height:63px;background:#ffffff"></div>
<div class="abs btn" style="left:1755px;top:583px;width:73px;height:33px;background:#1e4dff;color:#fff"><span class="abs" style="left:17px;top:11px"><svg width="11" height="12" viewBox="0 0 11 12" fill="none" stroke="#fff" stroke-width="1.1"><path d="M7.2 1.2l2 1.6-5.6 6.8-2.4.9.3-2.5z"/><path d="M4.8 11.3h5"/></svg></span><span class="abs" style="left:33px;top:9px">平仓</span></div>
<div class="abs tr" style="left:1717px;top:631px;width:149px;height:63px;background:#fafafa"></div>
<div class="abs btn" style="left:1755px;top:646px;width:73px;height:33px;background:#1e4dff;color:#fff"><span class="abs" style="left:17px;top:11px"><svg width="11" height="12" viewBox="0 0 11 12" fill="none" stroke="#fff" stroke-width="1.1"><path d="M7.2 1.2l2 1.6-5.6 6.8-2.4.9.3-2.5z"/><path d="M4.8 11.3h5"/></svg></span><span class="abs" style="left:33px;top:9px">平仓</span></div>
<div class="abs tr" style="left:1717px;top:694px;width:149px;height:63px;background:#ffffff"></div>
<div class="abs btn" style="left:1755px;top:709px;width:73px;height:33px;background:#1e4dff;color:#fff"><span class="abs" style="left:17px;top:11px"><svg width="11" height="12" viewBox="0 0 11 12" fill="none" stroke="#fff" stroke-width="1.1"><path d="M7.2 1.2l2 1.6-5.6 6.8-2.4.9.3-2.5z"/><path d="M4.8 11.3h5"/></svg></span><span class="abs" style="left:33px;top:9px">平仓</span></div>
<div class="abs tr" style="left:1717px;top:757px;width:149px;height:86px;background:#fafafa"></div>
<div class="abs btn" style="left:1755px;top:783px;width:73px;height:33px;background:#1e4dff;color:#fff"><span class="abs" style="left:17px;top:11px"><svg width="11" height="12" viewBox="0 0 11 12" fill="none" stroke="#fff" stroke-width="1.1"><path d="M7.2 1.2l2 1.6-5.6 6.8-2.4.9.3-2.5z"/><path d="M4.8 11.3h5"/></svg></span><span class="abs" style="left:33px;top:9px">平仓</span></div>
<div class="abs tr" style="left:1717px;top:843px;width:149px;height:86px;background:#ffffff"></div>
<div class="abs btn" style="left:1755px;top:869px;width:73px;height:33px;background:#1e4dff;color:#fff"><span class="abs" style="left:17px;top:11px"><svg width="11" height="12" viewBox="0 0 11 12" fill="none" stroke="#fff" stroke-width="1.1"><path d="M7.2 1.2l2 1.6-5.6 6.8-2.4.9.3-2.5z"/><path d="M4.8 11.3h5"/></svg></span><span class="abs" style="left:33px;top:9px">平仓</span></div>
<div class="abs tr" style="left:1717px;top:929px;width:149px;height:63px;background:#fafafa"></div>
<div class="abs btn" style="left:1755px;top:944px;width:73px;height:33px;background:#1e4dff;color:#fff"><span class="abs" style="left:17px;top:11px"><svg width="11" height="12" viewBox="0 0 11 12" fill="none" stroke="#fff" stroke-width="1.1"><path d="M7.2 1.2l2 1.6-5.6 6.8-2.4.9.3-2.5z"/><path d="M4.8 11.3h5"/></svg></span><span class="abs" style="left:33px;top:9px">平仓</span></div>
<div class="abs" style="left:1866px;top:442px;width:1px;height:600px;background:#ebeef5"></div>
<div class="abs" style="left:266px;top:442px;width:1px;height:600px;background:#ebeef5"></div>
</div>
<svg class="abs" style="left:44px;top:478px;z-index:50;pointer-events:none" width="300" height="300" viewBox="0 0 300 300">
<circle cx="150" cy="150" r="140" fill="none" stroke="#ff0000" stroke-width="4.2"/>
<text transform="translate(46.66,179.63) rotate(-106.0) translate(-7.41,0) scale(0.76,1)" font-family="Liberation Sans" font-weight="bold" font-size="25" fill="#ff0000">w</text>
<text transform="translate(42.62,155.00) rotate(-92.7) translate(-7.41,0) scale(0.76,1)" font-family="Liberation Sans" font-weight="bold" font-size="25" fill="#ff0000">w</text>
<text transform="translate(44.36,130.10) rotate(-79.3) translate(-7.41,0) scale(0.76,1)" font-family="Liberation Sans" font-weight="bold" font-size="25" fill="#ff0000">w</text>
<text transform="translate(51.79,106.28) rotate(-66.0) translate(-3.50,0) scale(1.0,1)" font-family="Liberation Sans" font-weight="bold" font-size="25" fill="#ff0000">.</text>
<text transform="translate(64.52,84.81) rotate(-52.7) translate(-7.75,0) scale(1.0,1)" font-family="Liberation Sans" font-weight="bold" font-size="25" fill="#ff0000">h</text>
<text transform="translate(81.86,66.85) rotate(-39.3) translate(-7.38,0) scale(1.0,1)" font-family="Liberation Sans" font-weight="bold" font-size="25" fill="#ff0000">a</text>
<text transform="translate(102.88,53.38) rotate(-26.0) translate(-3.44,0) scale(1.0,1)" font-family="Liberation Sans" font-weight="bold" font-size="25" fill="#ff0000">i</text>
<text transform="translate(126.43,45.12) rotate(-12.7) translate(-7.41,0) scale(0.76,1)" font-family="Liberation Sans" font-weight="bold" font-size="25" fill="#ff0000">w</text>
<text transform="translate(151.25,42.51) rotate(0.7) translate(-7.38,0) scale(1.0,1)" font-family="Liberation Sans" font-weight="bold" font-size="25" fill="#ff0000">a</text>
<text transform="translate(176.01,45.69) rotate(14.0) translate(-3.44,0) scale(1.0,1)" font-family="Liberation Sans" font-weight="bold" font-size="25" fill="#ff0000">i</text>
<text transform="translate(199.36,54.50) rotate(27.3) translate(-7.00,0) scale(1.0,1)" font-family="Liberation Sans" font-weight="bold" font-size="25" fill="#ff0000">y</text>
<text transform="translate(220.05,68.46) rotate(40.7) translate(-8.90,0) scale(0.8,1)" font-family="Liberation Sans" font-weight="bold" font-size="25" fill="#ff0000">m</text>
<text transform="translate(236.97,86.81) rotate(54.0) translate(-3.50,0) scale(1.0,1)" font-family="Liberation Sans" font-weight="bold" font-size="25" fill="#ff0000">.</text>
<text transform="translate(249.20,108.57) rotate(67.3) translate(-7.06,0) scale(1.0,1)" font-family="Liberation Sans" font-weight="bold" font-size="25" fill="#ff0000">c</text>
<text transform="translate(256.08,132.57) rotate(80.7) translate(-7.62,0) scale(1.0,1)" font-family="Liberation Sans" font-weight="bold" font-size="25" fill="#ff0000">o</text>
<text transform="translate(257.24,157.50) rotate(94.0) translate(-8.90,0) scale(0.8,1)" font-family="Liberation Sans" font-weight="bold" font-size="25" fill="#ff0000">m</text>
<text transform="translate(72.86,250.89) rotate(-322.6) translate(-3.68,5.04)" font-family="Liberation Sans" font-style="italic" font-size="14" fill="#ff0000">h</text>
<text transform="translate(84.95,259.08) rotate(-329.2) translate(-3.82,5.04)" font-family="Liberation Sans" font-style="italic" font-size="14" fill="#ff0000">a</text>
<text transform="translate(97.90,265.82) rotate(-335.8) translate(-1.82,5.04)" font-family="Liberation Sans" font-style="italic" font-size="14" fill="#ff0000">i</text>
<text transform="translate(111.54,271.04) rotate(-342.4) translate(-5.78,5.04)" font-family="Liberation Sans" font-style="italic" font-size="14" fill="#ff0000">w</text>
<text transform="translate(125.69,274.65) rotate(-349.0) translate(-3.82,5.04)" font-family="Liberation Sans" font-style="italic" font-size="14" fill="#ff0000">a</text>
<text transform="translate(140.16,276.62) rotate(-355.6) translate(-1.82,5.04)" font-family="Liberation Sans" font-style="italic" font-size="14" fill="#ff0000">i</text>
<text transform="translate(154.75,276.91) rotate(-362.1) translate(-3.47,5.04)" font-family="Liberation Sans" font-style="italic" font-size="14" fill="#ff0000">y</text>
<text transform="translate(169.29,275.53) rotate(-368.7) translate(-5.60,5.04)" font-family="Liberation Sans" font-style="italic" font-size="14" fill="#ff0000">m</text>
<text transform="translate(183.57,272.48) rotate(-375.3) translate(-1.36,5.04)" font-family="Liberation Sans" font-style="italic" font-size="14" fill="#ff0000">.</text>
<text transform="translate(197.41,267.82) rotate(-381.9) translate(-3.68,5.04)" font-family="Liberation Sans" font-style="italic" font-size="14" fill="#ff0000">c</text>
<text transform="translate(210.62,261.60) rotate(-388.5) translate(-3.92,5.04)" font-family="Liberation Sans" font-style="italic" font-size="14" fill="#ff0000">o</text>
<text transform="translate(223.03,253.91) rotate(-395.1) translate(-5.60,5.04)" font-family="Liberation Sans" font-style="italic" font-size="14" fill="#ff0000">m</text>
<text x="150" y="164" text-anchor="middle" font-family="Liberation Serif,serif" font-size="36" letter-spacing="5" fill="#ff0000">海外源码</text>
<text transform="translate(48.78,230.40) scale(1.0,1)" font-family="Liberation Sans" font-weight="bold" font-size="26" fill="#ff0000">h</text>
<text transform="translate(66.62,230.40) scale(1.0,1)" font-family="Liberation Sans" font-weight="bold" font-size="26" fill="#ff0000">a</text>
<text transform="translate(86.98,230.40) scale(1.0,1)" font-family="Liberation Sans" font-weight="bold" font-size="26" fill="#ff0000">i</text>
<text transform="translate(100.10,230.40) scale(0.76,1)" font-family="Liberation Sans" font-weight="bold" font-size="26" fill="#ff0000">w</text>
<text transform="translate(117.82,230.40) scale(1.0,1)" font-family="Liberation Sans" font-weight="bold" font-size="26" fill="#ff0000">a</text>
<text transform="translate(137.98,230.40) scale(1.0,1)" font-family="Liberation Sans" font-weight="bold" font-size="26" fill="#ff0000">i</text>
<text transform="translate(151.54,230.40) scale(1.0,1)" font-family="Liberation Sans" font-weight="bold" font-size="26" fill="#ff0000">y</text>
<text transform="translate(166.35,230.40) scale(0.8,1)" font-family="Liberation Sans" font-weight="bold" font-size="26" fill="#ff0000">m</text>
<text transform="translate(184.98,230.40) scale(1.0,1)" font-family="Liberation Sans" font-weight="bold" font-size="26" fill="#ff0000">.</text>
<text transform="translate(201.96,230.40) scale(1.0,1)" font-family="Liberation Sans" font-weight="bold" font-size="26" fill="#ff0000">c</text>
<text transform="translate(219.06,230.40) scale(1.0,1)" font-family="Liberation Sans" font-weight="bold" font-size="26" fill="#ff0000">o</text>
<text transform="translate(234.65,230.40) scale(0.8,1)" font-family="Liberation Sans" font-weight="bold" font-size="26" fill="#ff0000">m</text>
</svg>
</body></html>
